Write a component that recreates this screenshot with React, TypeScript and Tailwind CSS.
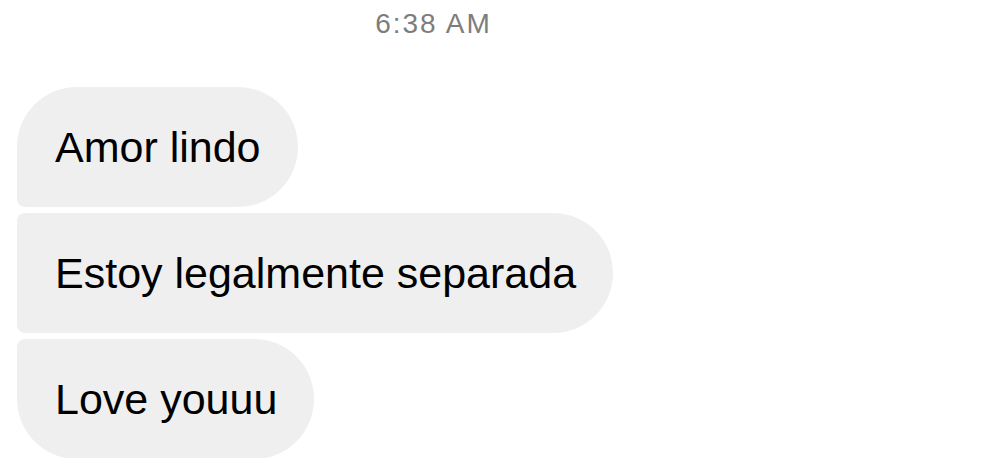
export default function App() {
  const messages = [
    { text: "Amor lindo", shape: "rounded-tl-[60px] rounded-bl-[8px] rounded-r-[60px]" },
    { text: "Estoy legalmente separada", shape: "rounded-tl-[8px] rounded-bl-[8px] rounded-r-[60px]" },
    { text: "Love youuu", shape: "rounded-tl-[8px] rounded-bl-[60px] rounded-r-[60px]" },
  ]

  return (
    <div className="w-[1004px] h-[458px] overflow-hidden bg-white font-['Liberation_Sans',Arial,sans-serif]">
      <div className="w-[867px] h-[48px] flex items-center justify-center text-[28px] tracking-[2px] text-[#7d7d7d]">
        6:38 AM
      </div>
      <div className="mt-[39px] pl-[17px] flex flex-col items-start gap-[6px]">
        {messages.map((m) => (
          <div
            key={m.text}
            className={`h-[120px] pl-[38px] pr-[37px] flex items-center bg-[#efefef] text-black text-[43px] whitespace-nowrap ${m.shape}`}
          >
            {m.text}
          </div>
        ))}
      </div>
    </div>
  )
}
